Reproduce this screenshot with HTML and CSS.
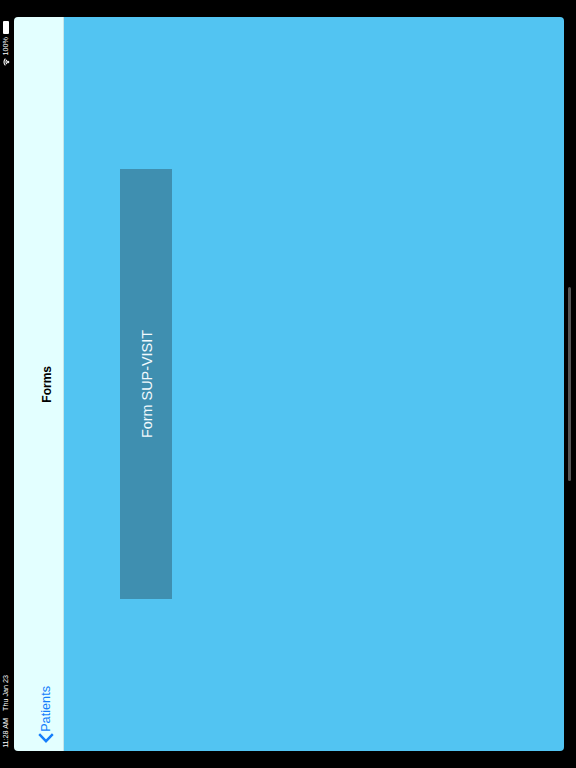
FILE: index.html
```html
<!DOCTYPE html>
<html lang="en">
  <head>
    <meta charset="UTF-8" />
    <meta name="viewport" content="width=device-width, initial-scale=1" />
    <title>Forms</title>
    <link rel="stylesheet" href="styles.css">
  </head>
  <body>
    <div class="status-bar">
      <div class="status-right">
        <div class="battery"></div>
        <span class="status-text">100%</span>
        <svg class="wifi" viewBox="0 0 8 8" width="8" height="8">
          <g transform="rotate(-90 4 4)" fill="none" stroke="#fff" stroke-width="1.1">
            <path d="M0.6 3.4 A4.8 4.8 0 0 1 7.4 3.4"/>
            <path d="M2 4.8 A2.8 2.8 0 0 1 6 4.8"/>
            <path d="M3.2 6 A1.1 1.1 0 0 1 4.8 6 L4 6.8 Z" fill="#fff"/>
          </g>
        </svg>
      </div>
      <div class="status-left">
        <span class="status-text">11:28 AM</span>
        <span class="status-text">Thu Jan 23</span>
      </div>
    </div>

    <div class="app">
      <div class="nav">
        <div class="nav-back">
          <svg class="chevron" viewBox="0 0 16 10" width="16" height="10">
            <path d="M1.2 1.2 L8 8.2 L14.8 1.2" fill="none" stroke="#157efb" stroke-width="2.4"/>
          </svg>
          <span class="back-label">Patients</span>
        </div>
        <div class="nav-title">Forms</div>
      </div>
      <div class="content">
        <div class="form-button">Form SUP-VISIT</div>
      </div>
    </div>

    <div class="scroll-side">
      <div class="scroll-thumb"></div>
    </div>
  </body>
</html>
```

FILE: styles.css
```css
html, body {
  height: 100%;
}
body {
  background: #000;
  margin: 0;
  display: flex;
  font-family: "Liberation Sans", Arial, sans-serif;
  overflow: hidden;
}
.status-bar {
  width: 14px;
  display: flex;
  flex-direction: column;
  justify-content: space-between;
  align-items: center;
  padding: 21px 2px 20px 0;
  box-sizing: border-box;
}
.status-right {
  display: flex;
  flex-direction: column;
  align-items: center;
  gap: 3px;
}
.status-left {
  display: flex;
  flex-direction: column-reverse;
  align-items: center;
  gap: 7px;
}
.status-text {
  writing-mode: vertical-rl;
  transform: rotate(180deg);
  color: #fff;
  font-size: 7.2px;
  line-height: 10px;
  white-space: nowrap;
}
.battery {
  width: 6px;
  height: 13px;
  background: #fff;
  border-radius: 1px;
}
.wifi {
  display: block;
}
.app {
  width: 550px;
  margin: 17px 0;
  display: flex;
  border-radius: 4px;
  overflow: hidden;
}
.nav {
  width: 50px;
  background: #e3ffff;
  border-right: 1px solid #c5e6ea;
  box-sizing: border-box;
  position: relative;
  display: flex;
  flex-direction: column;
  justify-content: center;
  align-items: center;
}
.nav-title {
  writing-mode: vertical-rl;
  transform: rotate(180deg);
  font-size: 12px;
  font-weight: 700;
  color: #000;
  margin-left: 16px;
}
.nav-back {
  position: absolute;
  left: 24px;
  bottom: 8px;
  display: flex;
  flex-direction: column-reverse;
  align-items: center;
  gap: 1px;
}
.back-label {
  writing-mode: vertical-rl;
  transform: rotate(180deg);
  color: #157efb;
  font-size: 12.7px;
  line-height: 14px;
}
.chevron {
  display: block;
}
.content {
  flex: 1;
  background: #52c4f2;
  padding: 152px 0 0 56px;
}
.form-button {
  width: 52px;
  height: 430px;
  box-sizing: border-box;
  padding-right: 2px;
  background: #3f8fb0;
  color: #f2fafd;
  writing-mode: vertical-rl;
  transform: rotate(180deg);
  display: flex;
  align-items: center;
  justify-content: center;
  font-size: 14.4px;
}
.scroll-side {
  flex: 1;
  padding: 287px 0 0 4px;
}
.scroll-thumb {
  width: 3px;
  height: 194px;
  background: #555;
  border-radius: 2px;
}
```
